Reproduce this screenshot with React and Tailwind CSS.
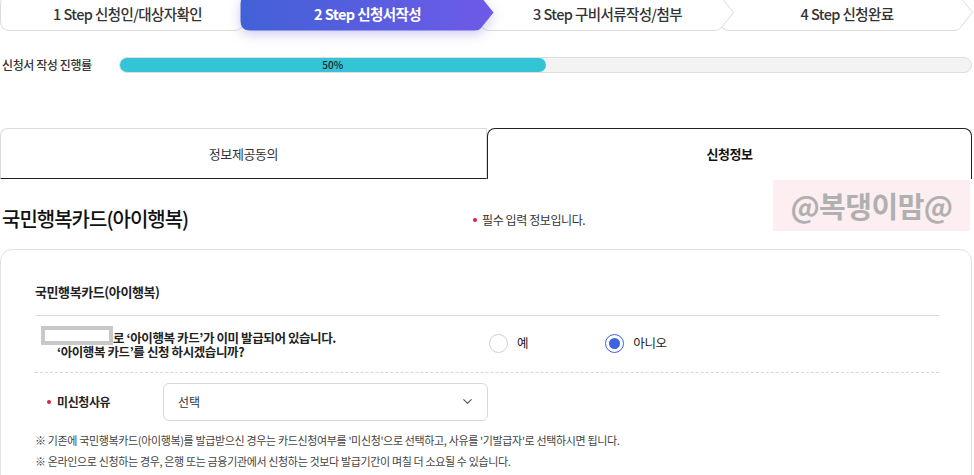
import { ChevronDown } from "lucide-react";

const steps = [
  { label: "1 Step 신청인/대상자확인", z: "z-30" },
  { label: "2 Step 신청서작성", z: "z-40", active: true },
  { label: "3 Step 구비서류작성/첨부", z: "z-20" },
  { label: "4 Step 신청완료", z: "z-10" },
];

function StepShape({ w, h, active }) {
  const d = 16;
  const m = h / 2;
  const p = `M10,0.5 H${w - d - 4} Q${w - d},0.5 ${w - d + 2},3 L${w - 1.5},${m} L${w - d + 2},${h - 3} Q${w - d},${h - 0.5} ${w - d - 4},${h - 0.5} H10 Q0.5,${h - 0.5} 0.5,${h - 10} V10 Q0.5,0.5 10,0.5 Z`;
  return (
    <svg
      width={w}
      height={h}
      viewBox={`0 0 ${w} ${h}`}
      className={
        "absolute inset-0 " +
        (active ? "drop-shadow-[0_4px_6px_rgba(90,90,210,0.3)]" : "")
      }
    >
      <defs>
        <linearGradient id="stepGrad" x1="0" y1="0" x2="1" y2="0">
          <stop offset="0" stopColor="#4261d7" />
          <stop offset="1" stopColor="#6e5ae8" />
        </linearGradient>
      </defs>
      <path
        d={p}
        fill={active ? "url(#stepGrad)" : "#fff"}
        stroke={active ? "none" : "#dcdcdc"}
        strokeWidth="1"
        strokeLinejoin="round"
      />
    </svg>
  );
}

function Stepper() {
  return (
    <div className="flex -mt-[6px] h-[37px]">
      {steps.map((s, i) => {
        const w = i === 3 ? 254 : 255;
        return (
          <div
            key={s.label}
            className={`relative h-[37px] shrink-0 ${s.z} ${i > 0 ? "-ml-[15px]" : ""}`}
            style={{ width: w }}
          >
            <StepShape w={w} h={37} active={s.active} />
            <div
              className={
                "relative flex h-full items-center justify-center pt-[2px] text-[14.5px] tracking-[-0.6px] " +
                (s.active ? "font-bold text-white" : "font-medium text-[#333]")
              }
            >
              {s.label}
            </div>
          </div>
        );
      })}
    </div>
  );
}

function Radio({ checked, label }) {
  return (
    <label className="flex items-center gap-[9px]">
      {checked ? (
        <span className="flex h-[19px] w-[19px] items-center justify-center rounded-full border-[1.5px] border-[#3d63dd] bg-white">
          <span className="h-[11px] w-[11px] rounded-full bg-[#3d63dd]" />
        </span>
      ) : (
        <span className="h-[19px] w-[19px] rounded-full border border-[#d2d2d2] bg-white" />
      )}
      <span className="text-[12.5px] text-[#222] tracking-[-0.3px]">{label}</span>
    </label>
  );
}

export default function App() {
  return (
    <div
      className="relative h-[475px] w-[974px] overflow-hidden bg-white pr-[2px] text-[#222]"
      style={{ fontFamily: '"Noto Sans CJK KR", "Noto Sans", sans-serif' }}
    >
      <Stepper />

      {/* progress */}
      <div className="mt-[25px] flex items-center">
        <div className="w-[119px] pl-[2px] text-[12px] font-medium tracking-[-0.4px] text-[#333]">
          신청서 작성 진행률
        </div>
        <div className="relative h-[16px] flex-1 rounded-full border border-[#dedede] bg-[#f3f3f3]">
          <div className="flex h-full w-1/2 items-center justify-center rounded-full bg-[#33c4d5] text-[10px] font-medium leading-none text-[#222]">
            50%
          </div>
        </div>
      </div>

      {/* tabs */}
      <div className="mt-[54px] flex h-[51px]">
        <div className="flex w-[487px] items-center justify-center rounded-tl-[8px] border-x border-t border-b border-[#dcdcdc] border-b-[#222] text-[13px] tracking-[-0.4px] text-[#333]">
          정보제공동의
        </div>
        <div className="flex flex-1 items-center justify-center rounded-t-[8px] border-x border-t border-[#222] text-[13px] font-bold tracking-[-0.4px] text-[#111]">
          신청정보
        </div>
      </div>

      {/* title */}
      <div className="mt-[25px] flex items-center">
        <h2 className="w-[473px] pl-[2px] text-[20px] font-medium tracking-[-1px] text-[#111]">
          국민행복카드(아이행복)
        </h2>
        <div className="flex items-center gap-[5px] pt-[2px] text-[12px] tracking-[-0.4px] text-[#333]">
          <span className="h-[4px] w-[4px] rounded-full bg-[#d6263b]" />
          필수 입력 정보입니다.
        </div>
      </div>

      {/* watermark */}
      <div className="absolute right-[4px] top-[180px] flex h-[51px] w-[197px] items-center justify-center bg-[#fdeef1]">
        <span className="text-[29px] font-bold tracking-[-0.5px] text-[#b0b0b0]">@복댕이맘@</span>
      </div>

      {/* card */}
      <div className="mt-[15px] rounded-[12px] border border-[#e2e2e2] px-[32px] pb-[20px] pl-[34px] pt-[32px]">
        <div className="pb-[13px] text-[13px] font-semibold tracking-[-0.4px] text-[#222]">
          국민행복카드(아이행복)
        </div>
        <div className="flex h-[58px] items-center border-y border-b-dashed border-t-[#dcdcdc] border-b-[#d8d8d8] border-dashed [border-top-style:solid]">
          <div className="-mt-[2px] w-[454px] pl-[6px] text-[12.5px] font-bold leading-[14px] tracking-[-0.4px] text-[#222]">
            <div className="flex items-end">
              <span className="h-[19px] w-[72px] border-[4px] border-[#c8c8c8] bg-white" />
              <span>로 ‘아이행복 카드’가 이미 발급되어 있습니다.</span>
            </div>
            <div className="pl-[16px]">‘아이행복 카드’를 신청 하시겠습니까?</div>
          </div>
          <div className="flex items-center gap-[77px]">
            <Radio label="예" />
            <Radio checked label="아니오" />
          </div>
        </div>
        <div className="mt-[10px] flex items-center">
          <div className="flex w-[128px] items-center gap-[6px] pl-[12px] text-[12px] font-bold tracking-[-0.4px] text-[#222]">
            <span className="h-[4px] w-[4px] rounded-full bg-[#d6263b]" />
            미신청사유
          </div>
          <div className="flex h-[38px] w-[325px] items-center justify-between rounded-[6px] border border-[#d8d8d8] pl-[14px] pr-[12px] text-[12px] text-[#333]">
            선택
            <ChevronDown size={15} strokeWidth={1.8} className="text-[#555]" />
          </div>
        </div>
        <div className="mt-[9px] text-[11px] leading-[21px] tracking-[-0.35px] text-[#444]">
          <p>※ 기존에 국민행복카드(아이행복)를 발급받으신 경우는 카드신청여부를 '미신청'으로 선택하고, 사유를 '기발급자'로 선택하시면 됩니다.</p>
          <p>※ 온라인으로 신청하는 경우, 은행 또는 금융기관에서 신청하는 것보다 발급기간이 며칠 더 소요될 수 있습니다.</p>
        </div>
      </div>
    </div>
  );
}
